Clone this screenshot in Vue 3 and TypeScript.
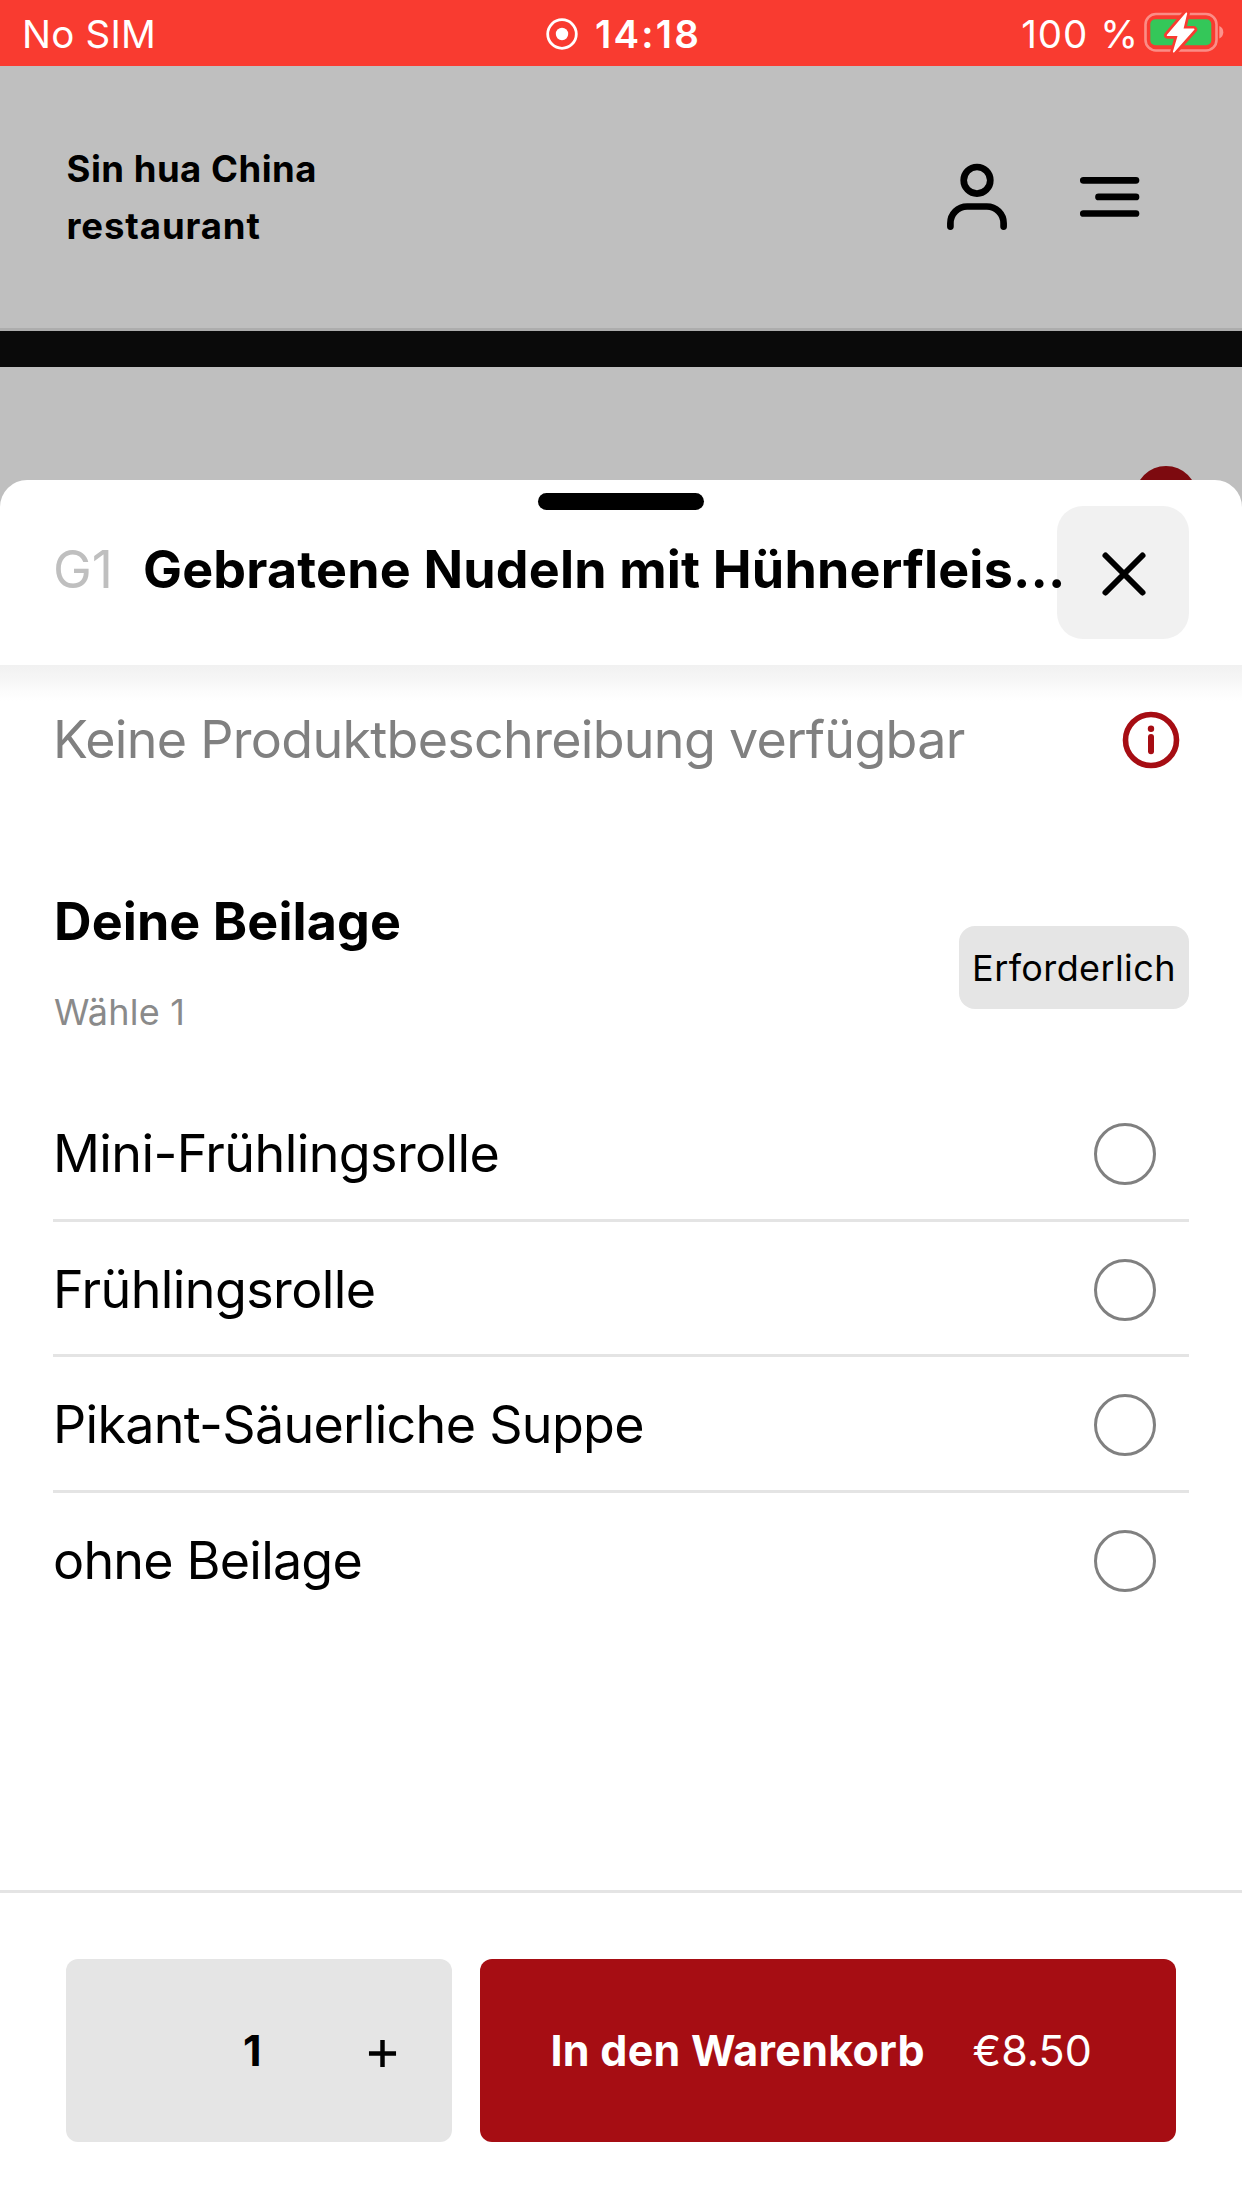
<script setup lang="ts">
import { computed, ref } from 'vue'

interface SideDish {
  id: string
  name: string
  spacing: string
}

const sideDishes: SideDish[] = [
  { id: 'mini', name: 'Mini-Frühlingsrolle', spacing: 'normal' },
  { id: 'roll', name: 'Frühlingsrolle', spacing: 'normal' },
  { id: 'soup', name: 'Pikant-Säuerliche Suppe', spacing: 'tight' },
  { id: 'none', name: 'ohne Beilage', spacing: 'tighter' },
]

const selected = ref<string | null>(null)
const quantity = ref(1)
const unitPrice = 8.5
const total = computed(() => `€${(unitPrice * quantity.value).toFixed(2)}`)
</script>

<template>
  <div class="screen">
    <div class="status">
      <span class="carrier">No SIM</span>
      <div class="clock">
        <svg class="record" viewBox="0 0 32 32" aria-hidden="true">
          <circle cx="16" cy="16" r="14.3" fill="none" stroke="#fff" stroke-width="2.8" />
          <circle cx="16" cy="16" r="6.2" fill="#fff" />
        </svg>
        <span>14:18</span>
      </div>
      <div class="power">
        <span>100 %</span>
        <svg class="battery" viewBox="0 0 80 42" aria-hidden="true">
          <rect x="1.5" y="3" width="71" height="36.5" rx="10.5" fill="none" stroke="#fff" stroke-opacity=".42" stroke-width="2.6" />
          <path d="M75.3 15c2.4.8 4 3.2 4 6.2s-1.6 5.400-4 6.200z" fill="#fff" fill-opacity=".45" />
          <rect x="6.300" y="8.300" width="61" height="26" rx="5" fill="#34c759" />
          <path
            d="M42.400 2 23.600 24.300h11L29.700 41l20-22.500H38.600z"
            fill="#fff" stroke="#f93b30" stroke-width="7" stroke-linejoin="round"
          />
          <path
            d="M42.400 2.200 23.600 24.300h11L29.700 40.800l20-22.500H38.600z"
            fill="#fff" stroke="#fff" stroke-width="1.600" stroke-linejoin="round"
          />
        </svg>
      </div>
    </div>

    <header class="site">
      <h1>Sin hua China<br /><span class="second">restaurant</span></h1>
      <nav>
        <svg class="person" viewBox="0 0 60 68" aria-hidden="true">
          <circle cx="30" cy="17.300" r="13.300" />
          <path d="M3.400 63.600V60.300a16.800 16.800 0 0 1 16.800-16.800H39.800a16.800 16.800 0 0 1 16.800 16.800V63.600" />
        </svg>
        <svg class="menu" viewBox="0 0 60 68" aria-hidden="true">
          <path d="M3.300 17.300H56M18.500 33.900H56M3.300 50.500H56" />
        </svg>
      </nav>
    </header>
    <div class="cover"></div>
    <div class="backdrop"><i class="bubble"></i></div>

    <section class="sheet">
      <div class="handle"></div>
      <div class="sheet-head">
        <span class="code">G1</span>
        <h2>Gebratene Nudeln mit Hühnerfleis...</h2>
        <button class="close" aria-label="Schließen">
          <svg viewBox="0 0 48 48"><path d="M5.500 5.500l37 37M42.500 5.500l-37 37" /></svg>
        </button>
      </div>

      <div class="body">
        <div class="description">
          <p>Keine Produktbeschreibung verfügbar</p>
          <svg class="info" viewBox="0 0 58 58" aria-hidden="true">
            <circle cx="29" cy="29" r="25.500" fill="none" stroke="#a60d13" stroke-width="5.600" />
            <circle cx="29" cy="17.700" r="3.200" fill="#a60d13" />
            <path d="M29 26V40.300" stroke="#a60d13" stroke-width="6" stroke-linecap="round" />
          </svg>
        </div>

        <div class="group">
          <div class="group-text">
            <h3>Deine Beilage</h3>
            <p>Wähle 1</p>
          </div>
          <span class="badge">Erforderlich</span>
        </div>

        <ul>
          <li v-for="dish in sideDishes" :key="dish.id" :class="dish.spacing" @click="selected = dish.id">
            <span>{{ dish.name }}</span>
            <i class="radio" :class="{ on: selected === dish.id }"></i>
          </li>
        </ul>
      </div>

      <footer>
        <div class="stepper">
          <span class="count">{{ quantity }}</span>
          <button class="plus" aria-label="Mehr" @click="quantity++">
            <svg viewBox="0 0 30 30"><path d="M1 15H29M15 1V29" /></svg>
          </button>
        </div>
        <button class="add">
          <strong>In den Warenkorb</strong>
          <span>{{ total }}</span>
        </button>
      </footer>
    </section>
  </div>
</template>

<style>
body {
  margin: 0;
  background: #fff;
}
</style>

<style scoped>
.screen {
  display: flex;
  flex-direction: column;
  width: 1242px;
  height: 2208px;
  overflow: hidden;
  background: #bfbfbf;
  color: #000;
  font-family: Inter, "Liberation Sans", sans-serif;
}

h1, h2, h3, p, ul {
  margin: 0;
  padding: 0;
}

button {
  border: 0;
  padding: 0;
  font: inherit;
  color: inherit;
}

svg {
  display: block;
  flex: none;
}

/* status bar */
.status {
  display: flex;
  align-items: center;
  flex: none;
  height: 66px;
  padding: 2px 18px 0 22px;
  box-sizing: border-box;
  background: #f93b30;
  color: #fff;
  font-size: 38.5px;
  line-height: 64px;
}

.carrier {
  width: 524px;
  letter-spacing: 0.2px;
}

.clock {
  display: flex;
  align-items: center;
  gap: 17px;
  font-weight: 600;
  letter-spacing: 2.2px;
}

.record {
  width: 32px;
  height: 32px;
}

.power {
  display: flex;
  align-items: center;
  gap: 5px;
  margin-left: auto;
  letter-spacing: 1px;
}

.battery {
  width: 80px;
  height: 42px;
  margin-top: -5px;
}

/* restaurant header */
.site {
  display: flex;
  align-items: center;
  justify-content: space-between;
  flex: none;
  height: 265px;
  padding: 0 102px 0 66.5px;
  box-sizing: border-box;
  border-bottom: 3px solid #adadad;
}

h1 {
  padding-top: 1px;
  font-size: 36.5px;
  font-weight: 650;
  line-height: 56.5px;
  letter-spacing: 0.5px;
}

.second {
  letter-spacing: 0.9px;
}

nav {
  display: flex;
  align-items: center;
  gap: 73px;
}

nav svg {
  width: 60px;
  height: 68px;
  fill: none;
  stroke: #000;
  stroke-width: 6.7px;
  stroke-linecap: round;
}

.cover {
  flex: none;
  height: 36px;
  background: #0a0a0a;
}

.backdrop {
  display: flex;
  justify-content: flex-end;
  flex: none;
  height: 113px;
  padding: 99px 45px 0 0;
  box-sizing: border-box;
}

.bubble {
  width: 62px;
  height: 62px;
  flex: none;
  border-radius: 50%;
  background: #7d0a0f;
}

/* bottom sheet */
.sheet {
  display: flex;
  flex-direction: column;
  flex: 1;
  position: relative;
  background: #fff;
  border-radius: 27px 27px 0 0;
  overflow: hidden;
}

.handle {
  flex: none;
  width: 166px;
  height: 17px;
  margin: 13px auto 0;
  border-radius: 9px;
  background: #000;
}

.sheet-head {
  display: flex;
  align-items: center;
  flex: none;
  height: 155px;
  padding: 0 53px 30px;
  box-sizing: border-box;
}

.code {
  width: 90px;
  padding-bottom: 6px;
  font-size: 52px;
  line-height: 60px;
  color: #bfbfbf;
}

h2 {
  position: relative;
  z-index: 1;
  flex: 1;
  min-width: 0;
  padding-bottom: 6px;
  font-size: 52px;
  font-weight: 700;
  line-height: 60px;
  letter-spacing: 0.18px;
  white-space: nowrap;
}

.close {
  display: flex;
  align-items: center;
  justify-content: center;
  flex: none;
  width: 132.5px;
  height: 133px;
  padding: 2px 0 0 3px;
  border-radius: 26px;
  background: #f1f1f1;
  box-sizing: border-box;
}

.close svg {
  width: 48px;
  height: 48px;
  fill: none;
  stroke: #000;
  stroke-width: 6px;
  stroke-linecap: round;
}

.body {
  display: flex;
  flex-direction: column;
  flex: 1;
  padding: 0 53px;
  background: linear-gradient(#f1f1f1, #f5f5f5 12px, #fbfbfb 24px, #fff 36px);
}

.description {
  display: flex;
  align-items: center;
  justify-content: space-between;
  height: 60px;
  padding: 45px 9px 0 0;
  color: #808080;
  font-size: 52px;
  line-height: 60px;
  letter-spacing: -0.7px;
}

.description p {
  white-space: nowrap;
}

.info {
  width: 58px;
  height: 58px;
}

.group {
  display: flex;
  align-items: center;
  justify-content: space-between;
  height: 180px;
  margin-top: 107px;
}

h3 {
  padding-left: 1px;
  font-size: 52px;
  font-weight: 700;
  line-height: 90px;
  letter-spacing: 0.09px;
}

.group-text p {
  padding-left: 1px;
  font-size: 36px;
  line-height: 90px;
  letter-spacing: 0.2px;
  color: #8a8a8a;
}

.badge {
  width: 230px;
  height: 83px;
  border-radius: 16px;
  background: #e5e5e5;
  font-size: 36px;
  line-height: 84px;
  letter-spacing: 0.4px;
  text-align: center;
}

ul {
  margin-top: 29px;
  list-style: none;
}

li {
  display: flex;
  align-items: center;
  justify-content: space-between;
  height: 135.7px;
  padding: 3px 33px 0 0;
  box-sizing: border-box;
  border-bottom: 3px solid #e4e4e4;
  font-size: 52px;
  line-height: 60px;
  letter-spacing: -0.6px;
}

li.tight {
  letter-spacing: -0.7px;
}

li.tighter {
  letter-spacing: -0.8px;
}

li:last-child {
  border-bottom-color: transparent;
}

.radio {
  width: 62px;
  height: 62px;
  box-sizing: border-box;
  border: 3px solid #808080;
  border-radius: 50%;
}

.radio.on {
  border: 18px solid #a60d13;
}

/* order bar */
footer {
  display: flex;
  gap: 28px;
  flex: none;
  height: 318px;
  padding: 66px 66px 0;
  box-sizing: border-box;
  border-top: 3px solid #e4e4e4;
  background: #fff;
}

.stepper {
  display: flex;
  align-items: center;
  width: 386px;
  height: 183px;
  border-radius: 12px;
  background: #e5e5e5;
}

.count {
  width: 125px;
  padding: 0 0 1px 177px;
  font-size: 43px;
  font-weight: 700;
}

.plus {
  margin-top: 6px;
  background: none;
}

.plus svg {
  width: 29px;
  height: 29px;
  stroke: #000;
  stroke-width: 4.6px;
}

.add {
  display: flex;
  align-items: center;
  justify-content: flex-start;
  flex: 1;
  height: 183px;
  padding: 0 0 1px 70.5px;
  border-radius: 12px;
  background: #a60d13;
  color: #fff;
  font-size: 43px;
}

.add strong {
  width: 422px;
  font-weight: 700;
  letter-spacing: 0.25px;
  text-align: left;
  white-space: nowrap;
}
</style>
